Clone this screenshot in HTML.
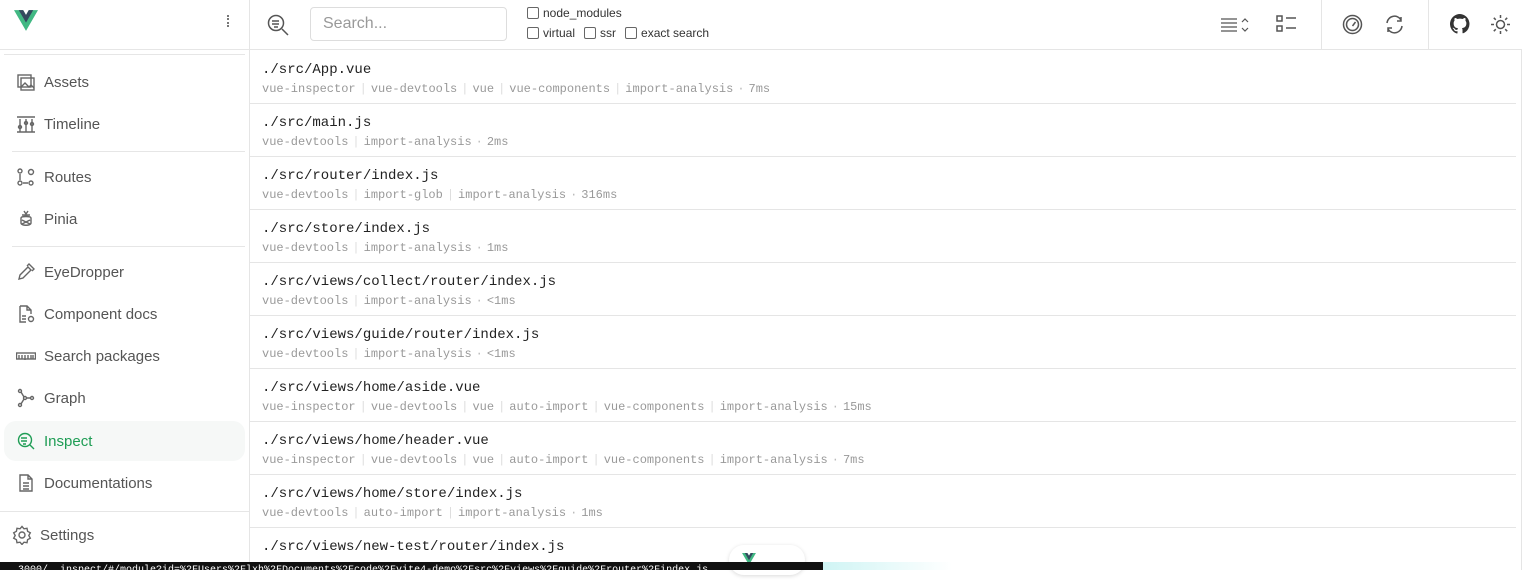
<!DOCTYPE html>
<html><head><meta charset="utf-8"><style>
*{box-sizing:border-box;margin:0;padding:0}
body{width:1522px;height:570px;overflow:hidden;background:#fff;font-family:"Liberation Sans",sans-serif;position:relative;color:#333}
.side{position:absolute;left:0;top:0;width:250px;height:570px;border-right:1px solid #e5e5e5}
.hr{position:absolute;left:12px;right:4px;height:1px;background:#e6e6e6}
.item{position:absolute;left:4px;width:241px;height:40px;display:flex;align-items:center;padding-left:12px;font-size:15px;color:#555}
.item svg{width:20px;height:20px;margin-right:8px;stroke:#666;fill:none;stroke-width:1.4}
.item.act{background:#f6f8f7;border-radius:12px;color:#1f9d55}
.item.act svg{stroke:#1f9d55}
.top{position:absolute;left:250px;top:0;right:0;height:50px;border-bottom:1px solid #e5e5e5}
.search{position:absolute;left:60px;top:7px;width:197px;height:34px;border:1px solid #ddd;border-radius:4px;font-size:16px;color:#999;padding:7px 12px}
.cb{position:absolute;font-size:12px;color:#333;display:flex;align-items:center}
.cb i{display:inline-block;width:12px;height:12px;border:1px solid #666;border-radius:2px;margin-right:4px}
.row{position:absolute;left:250px;width:1266px;height:53px;border-bottom:1px solid #e5e5e5;padding-left:12px}
.row b{display:block;font-weight:normal;font-family:"Liberation Mono",monospace;font-size:14px;color:#222;margin-top:11px;height:18px}
.row span{display:block;font-family:"Liberation Mono",monospace;font-size:12px;color:#999;margin-top:2px}
.row em{font-style:normal;color:#ddd;margin:0 4px}
.ic{position:absolute;stroke:#555;fill:none;stroke-width:1.5}
</style></head><body>
<div class="side">
<svg style="position:absolute;left:14px;top:10px" width="24" height="21" viewBox="0 0 256 221"><path fill="#41b883" d="M204.8 0H256L128 220.8 0 0h97.9L128 51.2 157.4 0z"/><path fill="#34495e" d="M50.6 0L128 132.5 204.8 0h-47.4L128 51.2 97.9 0z"/></svg>
<div style="position:absolute;left:227px;top:15px;width:2px;height:12px;border-left:2px dotted #777"></div>
<div class="hr" style="top:49px;left:0;right:0"></div>
<div class="hr" style="top:54px;left:4px"></div>
<div class="item" style="top:62px"><svg viewBox="0 0 20 20"><rect x="2" y="3" width="13" height="12"/><rect x="5" y="6" width="13" height="12"/><path d="M5 15l4-4 4 4 2-2 3 3"/></svg>Assets</div>
<div class="item" style="top:104px"><svg viewBox="0 0 20 20"><path d="M1 3h18M1 18h18M4 5v13M10 5v13M16 5v13"/><circle cx="4" cy="13" r="1.5"/><circle cx="10" cy="9" r="1.5"/><circle cx="16" cy="10" r="1.5"/></svg>Timeline</div>
<div class="hr" style="top:151px"></div>
<div class="item" style="top:157px"><svg viewBox="0 0 20 20"><circle cx="4" cy="4" r="2"/><circle cx="4" cy="16" r="2"/><circle cx="15" cy="16" r="2"/><circle cx="15" cy="5" r="2.5"/><path d="M4 7v6M7 16h5"/></svg>Routes</div>
<div class="item" style="top:199px"><svg viewBox="0 0 20 20"><path d="M8 2l2 3 2-3M6 6h8M5 9c0-2 10-2 10 0v5c0 3-10 3-10 0z M6 11l8 4M14 11l-8 4"/></svg>Pinia</div>
<div class="hr" style="top:246px"></div>
<div class="item" style="top:252px"><svg viewBox="0 0 20 20"><path d="M3 17l1-4 8-8 3 3-8 8zM11 4l2-2 5 5-2 2"/></svg>EyeDropper</div>
<div class="item" style="top:294px"><svg viewBox="0 0 20 20"><path d="M4 2h7l4 4v4M4 2v16h6M11 2v4h4M6 12h4M6 15h4"/><circle cx="15" cy="15" r="2.5"/></svg>Component docs</div>
<div class="item" style="top:336px"><svg viewBox="0 0 20 20"><rect x="0.5" y="7" width="19" height="6"/><path d="M3 13V9M6 13V9M9 14V9M12 13V9M15 13V9M17 13V9"/></svg>Search packages</div>
<div class="item" style="top:378px"><svg viewBox="0 0 20 20"><circle cx="4" cy="3" r="1.5"/><circle cx="4" cy="17" r="1.5"/><circle cx="16" cy="10" r="1.5"/><circle cx="9" cy="10" r="1.5"/><path d="M5 4l3 5M5 16l3-5M10.5 10h4"/></svg>Graph</div>
<div class="item act" style="top:421px"><svg viewBox="0 0 20 20"><circle cx="9" cy="9" r="6.5"/><path d="M14 14l4 4M5 7h6M5 10h6M7 13h3"/></svg>Inspect</div>
<div class="item" style="top:463px"><svg viewBox="0 0 20 20"><path d="M4 2h8l4 4v12H4zM12 2v4h4M7 10h6M7 13h6M7 16h6"/></svg>Documentations</div>
<div class="hr" style="top:511px;left:0;right:0"></div>
<div class="item" style="top:515px;left:0"><svg viewBox="0 0 20 20"><circle cx="10" cy="10" r="3"/><path d="M10 1.5l2 2.3 3-.5.6 3 2.7 1.5-1.5 2.7 1.5 2.7-2.7 1.5-.6 3-3-.5-2 2.3-2-2.3-3 .5-.6-3-2.7-1.5 1.5-2.7-1.5-2.7 2.7-1.5.6-3 3 .5z"/></svg>Settings</div>
</div>
<div class="top">
<svg class="ic" style="left:16px;top:13px" width="24" height="24" viewBox="0 0 24 24"><circle cx="10" cy="10" r="7.5"/><path d="M16 16l6 6M6 8h7M6 11h7M8 14h4"/></svg>
<div class="search">Search...</div>
<div class="cb" style="left:277px;top:6px"><i></i>node_modules</div>
<div class="cb" style="left:277px;top:26px"><i></i>virtual<i style="margin-left:9px"></i>ssr<i style="margin-left:9px"></i>exact search</div>
<svg class="ic" style="left:970px;top:16px" width="34" height="18" viewBox="0 0 34 18"><path d="M1 3h16M1 7h16M1 11h16M1 15h16M22 6l3-3 3 3M22 12l3 3 3-3" stroke-width="1.2"/></svg>
<svg class="ic" style="left:1026px;top:14px" width="22" height="20" viewBox="0 0 22 20"><rect x="1" y="2" width="5" height="5"/><rect x="1" y="12" width="5" height="5"/><path d="M10 4h10M10 14h10"/></svg>
<div style="position:absolute;left:1071px;top:0;width:1px;height:50px;background:#e5e5e5"></div>
<svg class="ic" style="left:1092px;top:14px" width="21" height="21" viewBox="0 0 21 21"><circle cx="10.5" cy="10.5" r="9"/><circle cx="10.5" cy="10.5" r="6"/><path d="M10.5 12l3-4"/></svg>
<svg class="ic" style="left:1134px;top:14px" width="21" height="21" viewBox="0 0 21 21"><path d="M3 9a7.5 7.5 0 0 1 14-3M17 3v4h-4M18 12a7.5 7.5 0 0 1-14 3M4 18v-4h4"/></svg>
<div style="position:absolute;left:1178px;top:0;width:1px;height:50px;background:#e5e5e5"></div>
<svg style="position:absolute;left:1200px;top:14px" width="20" height="20" viewBox="0 0 16 16"><path fill="#333" d="M8 0a8 8 0 0 0-2.5 15.6c.4 0 .5-.2.5-.4v-1.5c-2.2.5-2.7-1-2.7-1-.4-.9-.9-1.200-.9-1.200-.7-.5.1-.5.1-.5.8.1 1.2.8 1.2.8.7 1.3 1.9.9 2.3.7.1-.5.3-.9.5-1.1-1.8-.2-3.6-.9-3.6-4 0-.9.3-1.6.8-2.1-.1-.2-.4-1 .1-2.1 0 0 .7-.2 2.2.8a7.4 7.4 0 0 1 4 0c1.5-1 2.2-.8 2.2-.8.4 1.1.2 1.9.1 2.1.5.6.8 1.3.8 2.1 0 3.1-1.9 3.7-3.6 3.9.3.3.5.8.5 1.5v2.2c0 .2.1.5.6.4A8 8 0 0 0 8 0z"/></svg>
<svg class="ic" style="left:1240px;top:14px" width="21" height="21" viewBox="0 0 21 21" stroke-width="1.3"><circle cx="10.5" cy="10.5" r="4"/><path d="M10.5 1v3M10.5 17v3M1 10.5h3M17 10.5h3M3.8 3.8l2 2M15.2 15.2l2 2M3.8 17.2l2-2M15.2 5.8l2-2"/></svg>
</div>
<div style="position:absolute;left:1521px;top:50px;width:1px;height:520px;background:#e5e5e5"></div>

<div class="row" style="top:51px"><b>./src/App.vue</b><span>vue-inspector<em>|</em>vue-devtools<em>|</em>vue<em>|</em>vue-components<em>|</em>import-analysis<em style="color:#bbb">·</em>7ms</span></div>
<div class="row" style="top:104px"><b>./src/main.js</b><span>vue-devtools<em>|</em>import-analysis<em style="color:#bbb">·</em>2ms</span></div>
<div class="row" style="top:157px"><b>./src/router/index.js</b><span>vue-devtools<em>|</em>import-glob<em>|</em>import-analysis<em style="color:#bbb">·</em>316ms</span></div>
<div class="row" style="top:210px"><b>./src/store/index.js</b><span>vue-devtools<em>|</em>import-analysis<em style="color:#bbb">·</em>1ms</span></div>
<div class="row" style="top:263px"><b>./src/views/collect/router/index.js</b><span>vue-devtools<em>|</em>import-analysis<em style="color:#bbb">·</em>&lt;1ms</span></div>
<div class="row" style="top:316px"><b>./src/views/guide/router/index.js</b><span>vue-devtools<em>|</em>import-analysis<em style="color:#bbb">·</em>&lt;1ms</span></div>
<div class="row" style="top:369px"><b>./src/views/home/aside.vue</b><span>vue-inspector<em>|</em>vue-devtools<em>|</em>vue<em>|</em>auto-import<em>|</em>vue-components<em>|</em>import-analysis<em style="color:#bbb">·</em>15ms</span></div>
<div class="row" style="top:422px"><b>./src/views/home/header.vue</b><span>vue-inspector<em>|</em>vue-devtools<em>|</em>vue<em>|</em>auto-import<em>|</em>vue-components<em>|</em>import-analysis<em style="color:#bbb">·</em>7ms</span></div>
<div class="row" style="top:475px"><b>./src/views/home/store/index.js</b><span>vue-devtools<em>|</em>auto-import<em>|</em>import-analysis<em style="color:#bbb">·</em>1ms</span></div>
<div class="row" style="top:528px;border:none"><b>./src/views/new-test/router/index.js</b></div>

<div style="position:absolute;left:729px;top:545px;width:76px;height:30px;border-radius:15px;background:#fff;box-shadow:0 1px 4px rgba(0,0,0,.15)"><svg style="position:absolute;left:13px;top:8px" width="14" height="12" viewBox="0 0 256 221"><path fill="#41b883" d="M204.8 0H256L128 220.8 0 0h97.9L128 51.2 157.4 0z"/><path fill="#34495e" d="M50.6 0L128 132.5 204.8 0h-47.4L128 51.2 97.9 0z"/></svg></div>
<div style="position:absolute;left:822px;top:562px;width:130px;height:8px;background:linear-gradient(90deg,#cff4f4,#fff)"></div>
<div style="position:absolute;left:0;top:562px;width:823px;height:8px;background:#111;color:#fff;font-size:10px;line-height:18px;overflow:hidden;white-space:nowrap;padding-left:18px;font-family:'Liberation Mono',monospace">3000/__inspect/#/module?id=%2FUsers%2Flxh%2FDocuments%2Fcode%2Fvite4-demo%2Fsrc%2Fviews%2Fguide%2Frouter%2Findex.js</div>
</body></html>
